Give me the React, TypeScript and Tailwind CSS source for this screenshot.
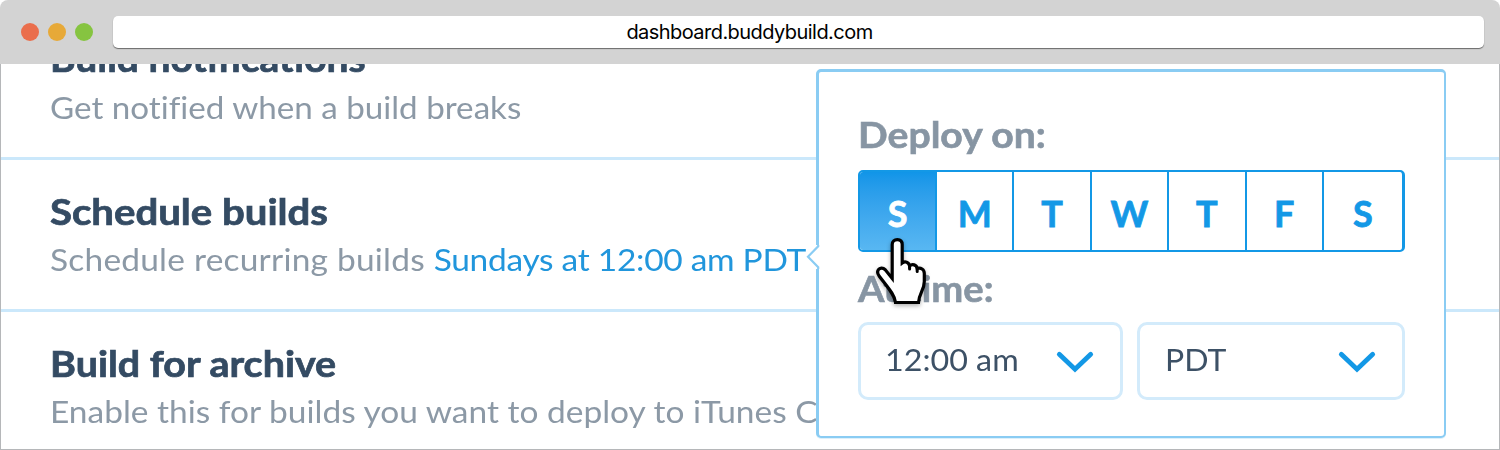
import type { ReactNode } from "react";

const days = ["S", "M", "T", "W", "T", "F", "S"];

type RowProps = {
  title: string;
  className: string;
  titleClass: string;
  textClass: string;
  children: ReactNode;
};

function Row({ title, className, titleClass, textClass, children }: RowProps) {
  return (
    <section className={`shrink-0 border-b-[3px] border-[#cbe8fb] pl-[49px] ${className}`}>
      <h2 className={`origin-left whitespace-nowrap text-[36px] font-bold leading-[44px] text-[#344b63] [-webkit-text-stroke:0.7px_#344b63] ${titleClass}`}>{title}</h2>
      <p className={`origin-left whitespace-nowrap text-[31px] leading-[44px] text-[#8c99a6] [font-variant-ligatures:none] ${textClass}`}>{children}</p>
    </section>
  );
}

function Chevron() {
  return (
    <svg width="40" height="24" viewBox="0 0 40 24" fill="none" className="shrink-0 translate-y-[2px]">
      <path d="M4.3 4.3 20 19.3 35.7 4.3" stroke="#1398e6" strokeWidth="4.8" strokeLinecap="round" />
    </svg>
  );
}

function Select({ label, className, labelClass }: { label: string; className: string; labelClass: string }) {
  return (
    <button className={`flex h-[78px] items-center justify-between rounded-[10px] border-[3px] border-[#d3ebfb] bg-white pl-[24px] pb-[3px] ${className}`}>
      <span className={`origin-left text-[31px] text-[#3d5166] ${labelClass}`}>{label}</span>
      <Chevron />
    </button>
  );
}

function HandCursor() {
  return (
    <svg width="60" height="76" viewBox="0 0 60 76" className="pointer-events-none absolute left-[870px] top-[234px] drop-shadow-[0_2px_2px_rgba(0,0,0,0.3)]">
      <path
        d="M22.2 44.5V10.6C22.2 7.2 24.4 5.6 27.3 5.6S32.2 7.4 32.2 10.6V29C35 26.8 38.8 28 39.6 31.8C42.2 29.6 46.5 30.6 47.2 34.4C50.8 33.2 54.3 35.5 54.3 39.4V47.5C54.3 56 49.2 58.8 48.5 68.5H25.5C24.8 60.5 17 52.5 9.3 42.2C5 36.5 10.5 31.4 15.3 35.8Z"
        fill="#fff" stroke="#000" strokeWidth="3.2" strokeLinejoin="miter"
      />
      <path d="M39.6 31.4V35M47.2 34V37.5" stroke="#000" strokeWidth="3" strokeLinecap="round" />
    </svg>
  );
}

export default function App() {
  return (
    <div className="relative flex h-[450px] w-[1500px] flex-col overflow-hidden bg-white font-['Lato',sans-serif]">
      <header className="flex h-16 shrink-0 items-center rounded-t-[8px] bg-[#d3d3d3] pl-[21px] pr-4">
        <div className="flex gap-[9px]">
          <i className="size-[18px] rounded-full bg-[#ea6e4c]" />
          <i className="size-[18px] rounded-full bg-[#e7a938]" />
          <i className="size-[18px] rounded-full bg-[#86c440]" />
        </div>
        <div className="ml-[20px] flex h-8 flex-1 items-center justify-center rounded-[5px] bg-white pr-[98px] font-['Inter',sans-serif] text-[20px] tracking-[-0.55px] text-black shadow-[0_1px_1px_rgba(0,0,0,0.5)]">
          dashboard.buddybuild.com
        </div>
      </header>
      <main className="flex flex-1 flex-col overflow-hidden border border-t-0 border-[#b5b7b9]">
        <div className="-mt-[57px] flex flex-col">
          <Row title="Build notifications" className="h-[153px] pt-[29px]" titleClass="scale-x-[1.082]" textClass="mt-[5px] scale-x-[1.07]">
            Get notified when a build breaks
          </Row>
          <Row title="Schedule builds" className="h-[152px] pt-[29px]" titleClass="scale-x-[1.115]" textClass="mt-[4px] scale-x-[1.08] tracking-[0.2px]">
            Schedule recurring builds <a className="tracking-[-0.26px] text-[#2196dc]">Sundays at 12:00 am PDT</a>
          </Row>
          <Row title="Build for archive" className="h-[152px] pt-[29px]" titleClass="scale-x-[1.096]" textClass="mt-[4px] scale-x-[1.08]">
            Enable this for builds you want to deploy to iTunes Connect
          </Row>
        </div>
      </main>
      <aside className="absolute left-[816px] top-[69px] h-[369px] w-[630px] rounded-[5px] border-2 border-l-[3px] border-t-[3px] border-[#8accf3] bg-white pl-[39px] pt-[38px] shadow-[0_1px_0_rgba(138,204,243,0.3)]">
        <svg width="14" height="24" viewBox="0 0 14 24" className="absolute -left-[13px] top-[173px]">
          <path d="M14 0H10V1L2 11.7 10 22V24H14Z" fill="#fff" />
          <path d="M12.2 0 12.2 1.2 2 11.7 12.2 22.2V24" fill="none" stroke="#8accf3" strokeWidth="2.2" />
        </svg>
        <h3 className="origin-left scale-x-[1.087] text-[36px] font-bold leading-[48px] text-[#8795a3] [-webkit-text-stroke:0.6px_#8795a3]">Deploy on:</h3>
        <div className="mt-[12px] flex h-[82px] w-[547px] overflow-hidden rounded-[5px] border-2 border-r-[3px] border-[#1398e6]">
          {days.map((day, i) => (
            <button
              key={i}
              className={
                i === 0
                  ? "w-[77px] border-r-2 border-[#1398e6] bg-linear-to-b from-[#1095e8] to-[#58b7f2] pt-1 text-[36px] font-bold text-white [-webkit-text-stroke:0.8px_#fff]"
                  : "w-[77.4px] border-r-2 border-[#1398e6] pt-1 text-[36px] font-bold text-[#1398e6] [-webkit-text-stroke:0.8px_#1398e6] last:flex-1 last:border-r-0"
              }
            >
              {day}
            </button>
          ))}
        </div>
        <h3 className="mt-[12px] origin-left scale-x-[1.06] text-[36px] font-bold leading-[48px] text-[#8795a3] [-webkit-text-stroke:0.6px_#8795a3]">At time:</h3>
        <div className="mt-[10px] flex gap-[14px]">
          <Select label="12:00 am" className="w-[265px] pr-[25px]" labelClass="scale-x-[1.04]" />
          <Select label="PDT" className="w-[268px] pr-[25px]" labelClass="scale-x-[1.03] pl-[1px]" />
        </div>
      </aside>
      <HandCursor />
    </div>
  );
}
